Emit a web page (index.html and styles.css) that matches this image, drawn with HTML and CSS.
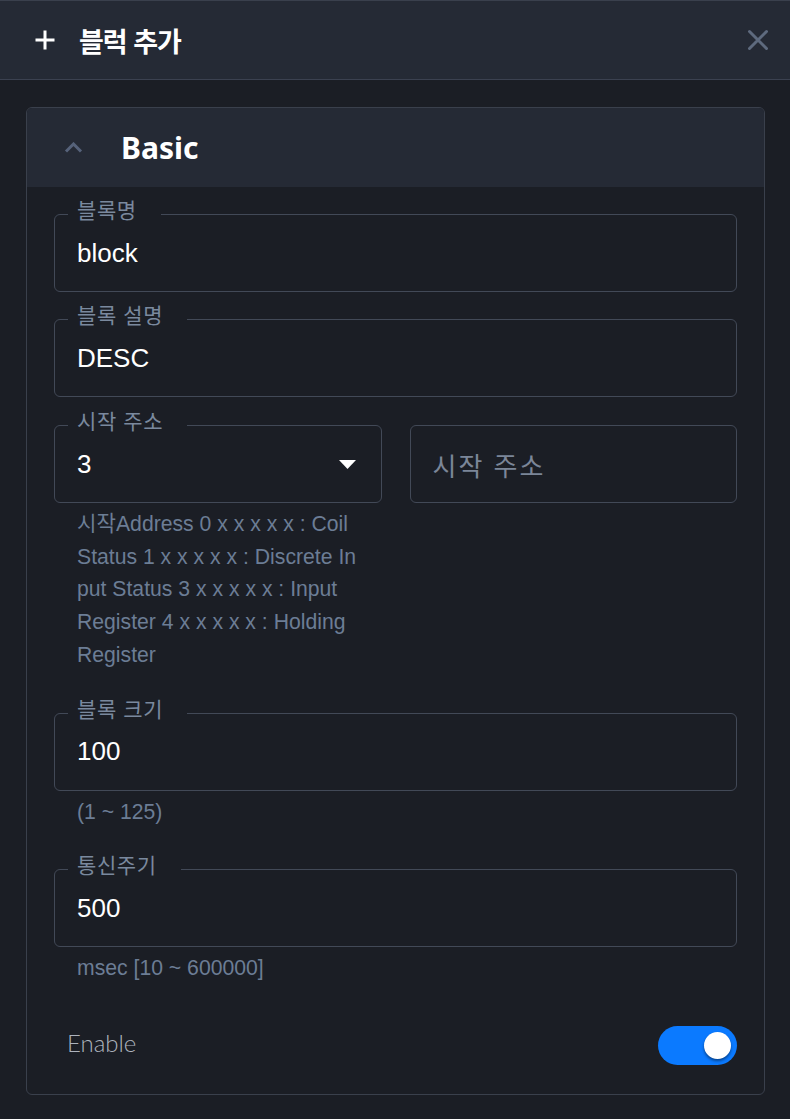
FILE: index.html
```html
<!DOCTYPE html>
<html lang="ko">
<head>
<meta charset="utf-8">
<title>블럭 추가</title>
<link rel="stylesheet" href="styles.css">
</head>
<body>
<div class="dialog">
  <header class="dlg-head">
    <svg class="ico-plus" width="22" height="22" viewBox="0 0 22 22"><path d="M11 1.5V20.5M1.5 11H20.5" stroke="#ffffff" stroke-width="3" fill="none"/></svg>
    <h2 class="dlg-title">블럭 추가</h2>
    <svg class="ico-close" width="22" height="22" viewBox="0 0 22 22"><path d="M2.5 2.5L19.5 19.5M19.5 2.5L2.5 19.5" stroke="#5e6a7e" stroke-width="3" stroke-linecap="round" fill="none"/></svg>
  </header>
  <main class="dlg-body">
    <section class="card">
      <div class="card-head">
        <svg class="ico-chev" width="19" height="11" viewBox="0 0 19 11"><path d="M2 9.5L9.5 2L17 9.5" stroke="#56627a" stroke-width="3" fill="none"/></svg>
        <span class="card-title">Basic</span>
      </div>
      <div class="card-body">
        <div class="group">
          <div class="field"><span class="label">블록명</span><span class="value">block</span></div>
        </div>
        <div class="group">
          <div class="field"><span class="label">블록 설명</span><span class="value">DESC</span></div>
        </div>
        <div class="row2">
          <div class="group">
            <div class="field select"><span class="label">시작 주소</span><span class="value">3</span>
              <svg class="caret" width="17" height="9" viewBox="0 0 17 9"><path d="M0 0H17L8.5 9Z" fill="#ffffff"/></svg>
            </div>
            <p class="helper wrap">시작Address 0 x x x x x : Coil Status 1 x x x x x : Discrete Input Status 3 x x x x x : Input Register 4 x x x x x : Holding Register</p>
          </div>
          <div class="group">
            <div class="field"><span class="placeholder">시작 주소</span></div>
          </div>
        </div>
        <div class="group">
          <div class="field"><span class="label">블록 크기</span><span class="value">100</span></div>
          <p class="helper">(1 ~ 125)</p>
        </div>
        <div class="group">
          <div class="field"><span class="label">통신주기</span><span class="value">500</span></div>
          <p class="helper">msec [10 ~ 600000]</p>
        </div>
        <div class="switch-row">
          <span class="switch-label">Enable</span>
          <span class="switch"><span class="knob"></span></span>
        </div>
      </div>
    </section>
  </main>
</div>
</body>
</html>
```

FILE: styles.css
```css
* { box-sizing: border-box; }
html, body { margin: 0; padding: 0; background: #1b1e25; }
body { font-family: "Liberation Sans", "Noto Sans CJK KR", sans-serif; }

.dialog {
  width: 790px;
  height: 1119px;
  background: #1b1e25;
  display: flex;
  flex-direction: column;
}

.dlg-head {
  height: 80px;
  background: #252a35;
  border-top: 1px solid #3a404d;
  border-bottom: 1px solid #3b4150;
  display: flex;
  align-items: center;
  padding: 0 21px 0 34px;
}
.ico-plus { flex: none; }
.dlg-title {
  margin: 0 0 0 23px;
  flex: 1;
  font-family: "Noto Sans CJK KR", sans-serif;
  font-weight: 700;
  font-size: 27px;
  letter-spacing: -1px;
  color: #ffffff;
  line-height: 1;
}
.ico-close { flex: none; }

.dlg-body {
  padding: 27px 25px 0 26px;
}

.card {
  border: 1px solid #3a404c;
  border-radius: 6px;
  overflow: hidden;
}
.card-head {
  height: 79px;
  background: #252a35;
  display: flex;
  align-items: center;
  padding-left: 37px;
}
.ico-chev { flex: none; }
.card-title {
  margin-left: 38px;
  font-family: "Noto Sans", sans-serif;
  font-weight: 700;
  font-size: 30px;
  color: #ffffff;
}

.card-body {
  padding: 27px 27px 29px 27px;
  display: flex;
  flex-direction: column;
  gap: 27px;
}

.row2 {
  margin-top: 1px;
  display: grid;
  grid-template-columns: 1fr 1fr;
  gap: 28px;
  align-items: start;
}

.field {
  position: relative;
  height: 78px;
  border: 1px solid #424957;
  border-radius: 6px;
  padding: 0 22px;
  display: flex;
  align-items: center;
}
.label {
  position: absolute;
  top: -18px;
  left: 13px;
  padding: 0 24px 0 9px;
  background: #1b1e25;
  font-family: "Noto Sans CJK KR", sans-serif;
  font-size: 21px;
  letter-spacing: 0.6px;
  line-height: 24px;
  color: #7a899e;
}
.value {
  font-family: "Liberation Sans", "Noto Sans CJK KR", sans-serif;
  font-size: 26px;
  color: #ffffff;
  flex: 1;
}
.select { padding-right: 25px; }
.caret { flex: none; }
.placeholder {
  font-family: "Noto Sans CJK KR", sans-serif;
  font-size: 26px;
  letter-spacing: 2px;
  color: #7b8698;
}

.helper {
  margin: 5px 23.5px 14px 23px;
  font-family: "Liberation Sans", "Noto Sans CJK KR", sans-serif;
  font-size: 21.2px;
  line-height: 32.7px;
  color: #6c7d95;
}
.wrap { word-break: break-all; }

.switch-row {
  display: flex;
  align-items: center;
  justify-content: space-between;
  padding-left: 13px;
}
.switch-label {
  font-family: "Lato", sans-serif;
  font-weight: 300;
  font-size: 24px;
  line-height: 30px;
  padding-bottom: 4px;
  color: #adb3bd;
}
.switch {
  width: 79px;
  height: 39px;
  border-radius: 20px;
  background: #0b7aff;
  display: flex;
  align-items: center;
  justify-content: flex-end;
  padding-right: 6px;
}
.knob {
  width: 27px;
  height: 27px;
  border-radius: 50%;
  background: #ffffff;
  box-shadow: 0 2px 3px rgba(0, 0, 0, 0.45);
}
```
